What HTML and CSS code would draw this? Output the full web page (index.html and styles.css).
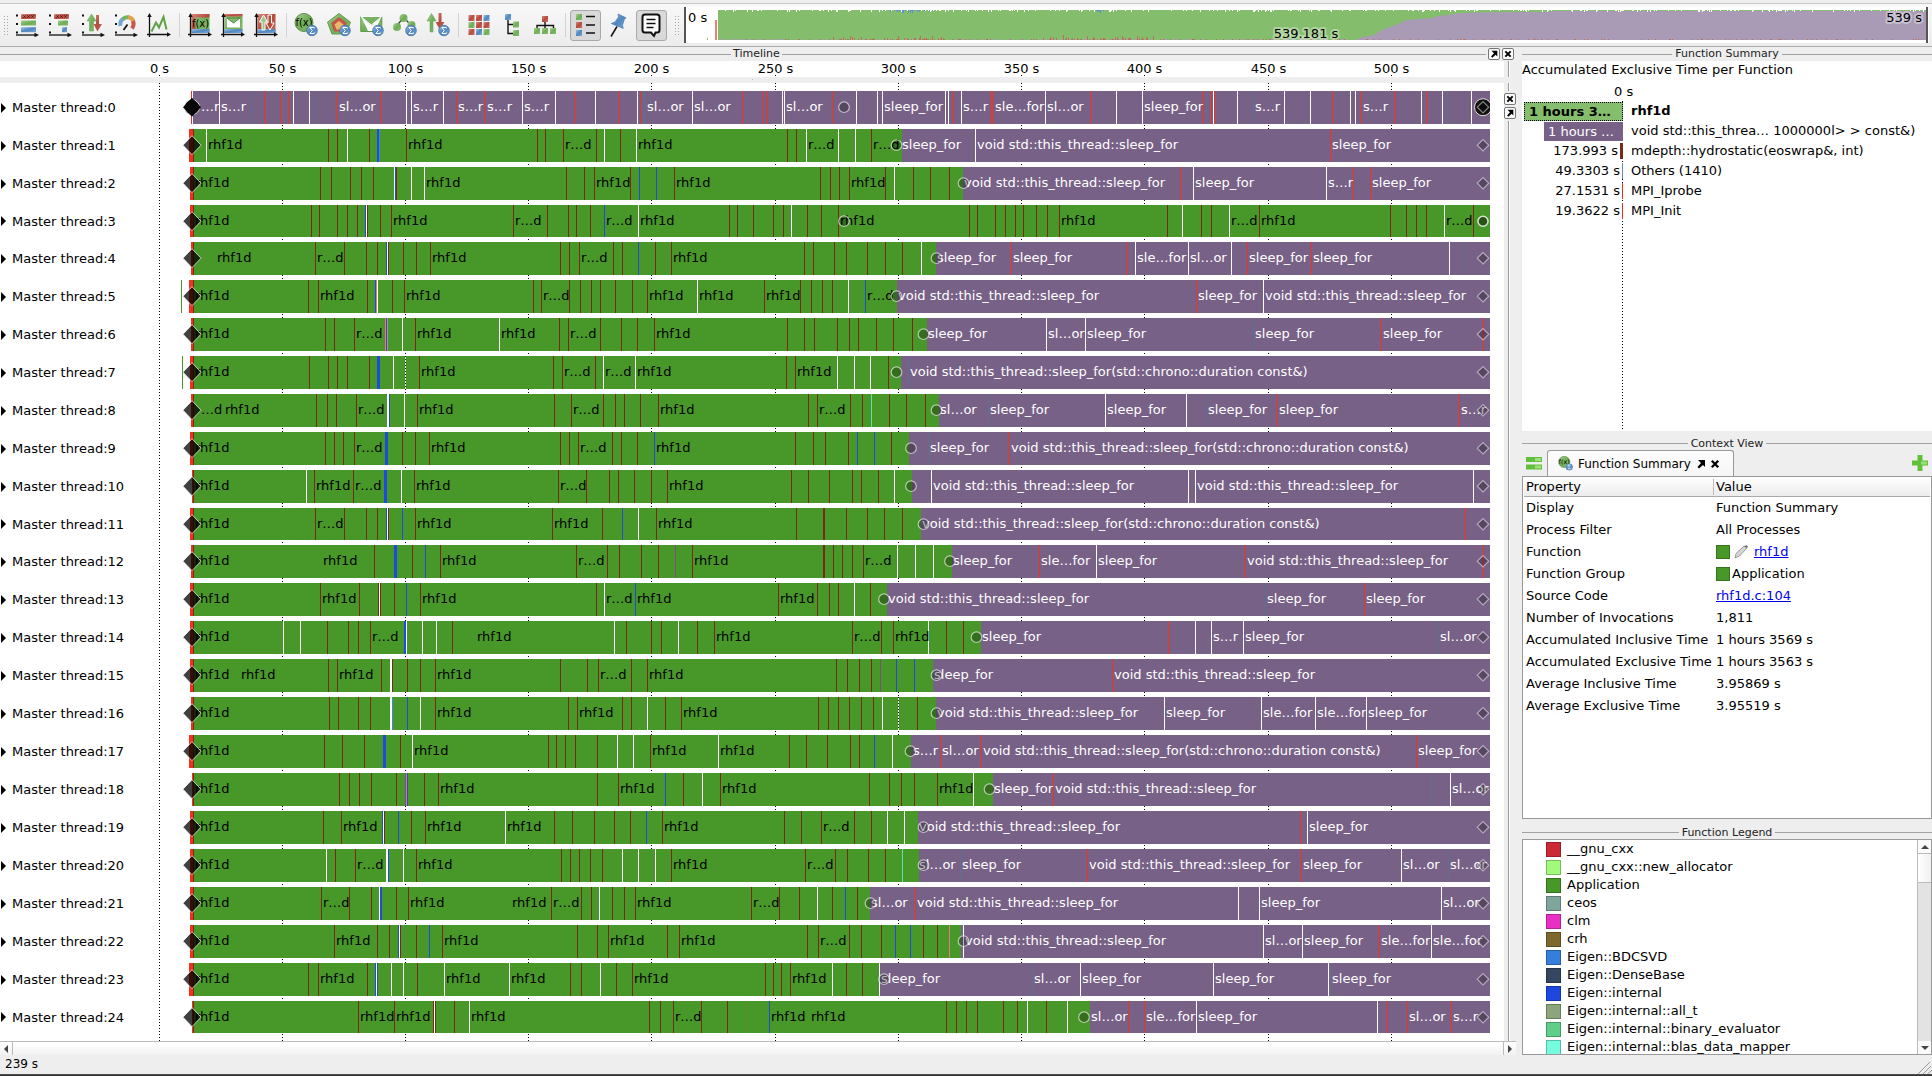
FILE: index.html
```html
<!DOCTYPE html>
<html lang="en">
<head>
<meta charset="utf-8">
<title>Trace View</title>
<link rel="stylesheet" href="styles.css">
</head>
<body>
<svg class="sprite" width="0" height="0">
  <defs>
    <linearGradient id="gr" x1="0" y1="0" x2="1" y2="1"><stop offset="0" stop-color="#a9cf96"/><stop offset=".5" stop-color="#6fae55"/><stop offset="1" stop-color="#86ba70"/></linearGradient>
    <linearGradient id="rd" x1="0" y1="0" x2="1" y2="1"><stop offset="0" stop-color="#d58a7c"/><stop offset=".5" stop-color="#b44b3e"/><stop offset="1" stop-color="#c86f60"/></linearGradient>
    <linearGradient id="bl" x1="0" y1="0" x2="1" y2="1"><stop offset="0" stop-color="#9fc1e4"/><stop offset=".5" stop-color="#4f86c0"/><stop offset="1" stop-color="#7aa9d8"/></linearGradient>
    <symbol id="dots" viewBox="0 0 24 24"><path d="M1 1.500h2v2H1zM1 10h2v2H1zM1 18.500h2v2H1z" fill="#111"/><path d="M1 22h20" stroke="#111" stroke-width="1.300"/><path d="M19.500 19.800L24 22l-4.500 2.200z" fill="#111"/></symbol>
    <symbol id="axes" viewBox="0 0 24 24"><path d="M2.500 24V3M0 21.500h21" stroke="#111" stroke-width="1.300" fill="none"/><path d="M.3 4L2.500 0l2.200 4zM20 19.300L24 21.500 20 23.700z" fill="#111"/></symbol>
    <symbol id="sum" viewBox="0 0 12 12"><circle cx="6" cy="6" r="5.300" fill="url(#bl)" stroke="#3c6fa8" stroke-width=".8"/><path d="M8.300 4V3H3.900l2.400 3-2.400 3h4.400V8" fill="none" stroke="#fff" stroke-width="1"/></symbol>
    <symbol id="popout" viewBox="0 0 12 12"><path d="M3 2h7v7L8 7 4 10.500 2.500 9 6 5z" fill="#000"/></symbol>
    <symbol id="close" viewBox="0 0 12 12"><path d="M2.800 2.800l6.400 6.400M9.200 2.800l-6.400 6.400" stroke="#000" stroke-width="2.300"/></symbol>
    <symbol id="fx" viewBox="0 0 24 24"><circle cx="10" cy="9.500" r="9" fill="url(#gr)" stroke="#5f8f4c"/><text x="10" y="13" font-size="10" text-anchor="middle" font-family="DejaVu Sans">f(x)</text><use href="#sum" x="12" y="11.500" width="12" height="12"/></symbol>
  </defs>
</svg>

<header class="toolbar">
  <i class="grip"></i>
  <span class="tool"><svg viewBox="0 0 24 24"><use href="#dots"/><rect x="6" y="1" width="15" height="5" rx="1" fill="url(#rd)"/><path d="M8.500 2.500l2 2m0-2l-2 2M12.500 2.500l2 2m0-2l-2 2M16.500 2.500l2 2m0-2l-2 2" stroke="#3b1410"/><rect x="6" y="7.500" width="15" height="5" fill="url(#gr)"/><rect x="6" y="14.200" width="15" height="5" fill="url(#bl)"/></svg></span>
  <span class="tool"><svg viewBox="0 0 24 24"><use href="#dots"/><rect x="6" y="1" width="15" height="5" rx="1" fill="url(#rd)"/><path d="M8.500 2.500l2 2m0-2l-2 2M12.500 2.500l2 2m0-2l-2 2M16.500 2.500l2 2m0-2l-2 2" stroke="#3b1410"/><rect x="10" y="7.500" width="10" height="5" fill="url(#gr)"/><rect x="14" y="14.200" width="5" height="5" fill="url(#bl)"/></svg></span>
  <span class="tool"><svg viewBox="0 0 24 24"><use href="#dots"/><path d="M8.500 18V8H6l4.500-7L15 8h-2.500v10z" fill="url(#gr)" stroke="#5f9a4c" stroke-width=".5"/><path d="M15 2h3v9h3l-4.500 7.500L12.500 11H15z" fill="url(#rd)"/></svg></span>
  <span class="tool"><svg viewBox="0 0 24 24"><use href="#dots"/><g fill="none" stroke-width="4"><path d="M6.500 13a7 7 0 0 1 3-7.500" stroke="#73a9d0"/><path d="M9 6a7 7 0 0 1 6-1.500" stroke="#77b35f"/><path d="M14 4a7 7 0 0 1 5.500 4.500" stroke="#e0a24c"/><path d="M19 8q1.500 4-1 7.500" stroke="#c9584a"/></g><path d="M9.500 17l4-5.500" stroke="#111" stroke-width="1.800"/></svg></span>
  <span class="tool"><svg viewBox="0 0 24 24"><use href="#axes"/><path d="M4.500 18.500L9 9.500l3 5L16.500 4l3 12.500" fill="none" stroke="#5fa146" stroke-width="2"/></svg></span>
  <i class="sep"></i>
  <span class="tool"><svg viewBox="0 0 24 24"><rect x="3.500" y="1" width="18" height="19" fill="url(#gr)"/><path d="M3.500 1h18v3.500H7.500V18h-4z" fill="url(#rd)"/><path d="M3.500 16h18v4h-18z" fill="url(#bl)"/><text x="12.500" y="13.500" font-size="10" text-anchor="middle" font-family="DejaVu Sans">f(x)</text><use href="#axes"/></svg></span>
  <span class="tool"><svg viewBox="0 0 24 24"><rect x="3.500" y="1" width="18" height="19" fill="url(#gr)"/><path d="M3.500 1h18v2.500h-18z" fill="url(#rd)"/><path d="M3.500 16h18v4h-18z" fill="url(#bl)"/><path d="M6 5h13v9.500H6z" fill="#fff"/><path d="M6 5l6.500 5L19 5z" fill="#85b774" stroke="#4d8a39"/><use href="#axes"/></svg></span>
  <span class="tool"><svg viewBox="0 0 24 24"><rect x="3.500" y="1" width="18" height="19" fill="url(#rd)"/><path d="M3.500 16h18v4h-18z" fill="url(#bl)"/><path d="M8 17V9H5.500L9.500 2l4 7H11v8z" fill="#9aca88" stroke="#fff"/><path d="M14 2h3.500v8H20l-4 7-4-7h2z" fill="#b9473c" stroke="#fff"/><use href="#axes"/></svg></span>
  <i class="sep"></i>
  <span class="tool"><svg viewBox="0 0 24 24"><use href="#fx"/></svg></span>
  <span class="tool"><svg viewBox="0 0 24 24"><path d="M12 .5l11.500 8.700L19 21H5L.5 9.200z" fill="url(#gr)" stroke="#5f9a4c"/><path d="M12 4l8 6-3.300 8.500H7.300L4 10z" fill="#c2584a"/><path d="M12 8l4.500 3.500-2 5h-5l-2-5z" fill="#e8b96a"/><use href="#sum" x="12" y="11.500" width="12" height="12"/></svg></span>
  <span class="tool"><svg viewBox="0 0 24 24"><path d="M.8 3.500h21v15H.8z" fill="url(#gr)" stroke="#5f9a4c"/><path d="M1.500 4.500l9.800 8 9.800-8L15 18H8z" fill="#fff"/><path d="M.8 3.500l10.500 8.500 10.500-8.500z" fill="#79b163" stroke="#fff"/><use href="#sum" x="12" y="11.500" width="12" height="12"/></svg></span>
  <span class="tool"><svg viewBox="0 0 24 24"><path d="M4 12.500l6.500-8 8 8" fill="none" stroke="#333" stroke-width="1.200"/><circle cx="10.500" cy="5" r="4" fill="url(#gr)"/><circle cx="4" cy="14" r="4" fill="url(#gr)"/><circle cx="18.500" cy="12" r="4" fill="url(#gr)"/><use href="#sum" x="12" y="11.500" width="12" height="12"/></svg></span>
  <span class="tool"><svg viewBox="0 0 24 24"><path d="M4 19V8H1L5.500.5 10 8H7v11z" fill="url(#gr)" stroke="#5f9a4c" stroke-width=".5"/><path d="M12.500 0h3v9h3l-4.500 8L9.500 9h3z" fill="url(#rd)"/><use href="#sum" x="12" y="11.500" width="12" height="12"/></svg></span>
  <i class="sep"></i>
  <span class="tool"><svg viewBox="0 0 24 24"><g fill="url(#rd)"><rect x="1.500" y="2" width="6" height="6"/><rect x="9" y="2" width="6" height="6"/><rect x="16.500" y="9" width="6" height="6"/><rect x="9" y="9" width="6" height="6"/><rect x="1.500" y="16" width="6" height="6"/></g><rect x="16.500" y="2" width="6" height="6" fill="url(#bl)"/><rect x="1.500" y="9" width="6" height="6" fill="url(#gr)"/><rect x="9" y="16" width="6" height="6" fill="url(#bl)"/><rect x="16.500" y="16" width="6" height="6" fill="url(#gr)"/></svg></span>
  <span class="tool"><svg viewBox="0 0 24 24"><path d="M8 5v15.500h6M8 11.500h6" fill="none" stroke="#111" stroke-width="1.400"/><rect x="5" y="1" width="6" height="6" fill="url(#bl)"/><rect x="13" y="8.500" width="6" height="6" fill="url(#gr)"/><rect x="13" y="17" width="6" height="6" fill="url(#gr)"/></svg></span>
  <span class="tool"><svg viewBox="0 0 24 24"><path d="M4 16v-3.500h16.500V16M12 9v7" fill="none" stroke="#111" stroke-width="1.400"/><rect x="9" y="3" width="6" height="6" fill="url(#rd)"/><rect x="1" y="15" width="6" height="6" fill="url(#gr)"/><rect x="9" y="15" width="6" height="6" fill="url(#gr)"/><rect x="17" y="15" width="6" height="6" fill="url(#gr)"/></svg></span>
  <i class="sep"></i>
  <span class="tool on"><svg viewBox="0 0 24 24"><rect x="3" y="1" width="6" height="6" fill="url(#gr)"/><rect x="3" y="9" width="6" height="6" fill="url(#rd)"/><rect x="3" y="17" width="6" height="6" fill="url(#bl)"/><path d="M13 3.500h9M13 12h9M13 20h9" stroke="#111" stroke-width="1.700"/></svg></span>
  <span class="tool"><svg viewBox="0 0 24 24"><path d="M5 23.500l6-10" stroke="#111" stroke-width="1.500"/><path d="M12 1l8 3.800-1.500 1.500-.5 1-1.500 5 .8 3.200-12-5L9 9l3.500-5z" fill="url(#bl)" stroke="#3b6ea5" stroke-width=".6"/></svg></span>
  <span class="tool on"><svg viewBox="0 0 24 24"><path d="M6 1.500h12q2.500 0 2.500 2.500v13q0 2.500-2.500 2.500h-1.500L15 23l-3-3.500H6Q3.500 19.500 3.500 17V4Q3.500 1.500 6 1.500z" fill="#fff" stroke="#111" stroke-width="2"/><path d="M7.500 6.500h9M7.500 10.500h9M7.500 14.500h7" stroke="#111" stroke-width="1.500"/></svg></span>
  <i class="grip grip-end"></i>
  <svg class="overview" id="overview" width="1245" height="36" viewBox="684 8 1245 36"></svg>
</header>

<main class="workspace">
  <section class="timeline">
    <div class="dock-title"><hr><span>Timeline</span><hr>
      <b class="mini"><svg><use href="#popout"/></svg></b><b class="mini"><svg><use href="#close"/></svg></b></div>
    <div class="axis-row"><svg id="axis" width="1504" height="16"></svg><i class="rail"></i></div>
    <div class="splitter"></div>
    <div class="chart-row">
      <div class="chart">
        <svg class="grid" id="grid" width="1504" height="958"></svg>
        <div class="rows" id="rows"></div>
      </div>
      <div class="side"><i class="rail short"></i><b class="mini"><svg><use href="#close"/></svg></b><b class="mini"><svg><use href="#popout"/></svg></b><i class="rail long"></i></div>
    </div>
    <div class="hscroll"><i class="arrow left"></i><i class="arrow right"></i></div>
  </section>

  <aside class="panels">
    <div class="dock-title"><hr><span>Function Summary</span><hr></div>
    <section class="summary">
      <h2>Accumulated Exclusive Time per Function</h2>
      <div class="zero">0 s</div>
      <div class="bars" id="bars"></div>
    </section>
    <div class="dock-title context-title"><hr><span>Context View</span><hr></div>
    <div class="tabs">
      <svg class="eq" width="16" height="13"><path d="M0 0h16v5H0zM0 7.500h16v5H0z" fill="#62bf3b"/><path d="M9 1h6v3H9zM9 8.500h6v3H9z" fill="#9be27c"/></svg>
      <div class="tab"><svg width="15" height="15" viewBox="0 0 24 24"><use href="#fx"/></svg><span>Function Summary</span><svg width="12" height="12"><use href="#popout"/></svg><svg width="12" height="12"><use href="#close"/></svg></div>
      <svg class="plus" width="16" height="16"><path d="M5.500 0h5v5.500H16v5h-5.500V16h-5v-5.500H0v-5h5.500z" fill="#62c13a"/><path d="M9 6.500h6v3H9z" fill="#97e077"/></svg>
    </div>
    <section class="context">
      <div class="prop head"><span>Property</span><span>Value</span></div>
      <div class="prop"><span>Display</span><span>Function Summary</span></div>
      <div class="prop"><span>Process Filter</span><span>All Processes</span></div>
      <div class="prop"><span>Function</span><span><i class="sw"></i><svg class="pen" width="14" height="14"><path d="M1 13l1-4.500L10 1l3 2-7.500 8z" fill="#d4d4d4" stroke="#888" stroke-width=".8"/><path d="M10 1l3-.8.800 1.800-.8 1z" fill="#666"/></svg><a>rhf1d</a></span></div>
      <div class="prop"><span>Function Group</span><span><i class="sw"></i><em>Application</em></span></div>
      <div class="prop"><span>Source Code</span><span><a>rhf1d.c:104</a></span></div>
      <div class="prop"><span>Number of Invocations</span><span>1,811</span></div>
      <div class="prop"><span>Accumulated Inclusive Time</span><span>1 hours 3569 s</span></div>
      <div class="prop"><span>Accumulated Exclusive Time</span><span>1 hours 3563 s</span></div>
      <div class="prop"><span>Average Inclusive Time</span><span>3.95869 s</span></div>
      <div class="prop"><span>Average Exclusive Time</span><span>3.95519 s</span></div>
    </section>
    <div class="dock-title legend-title"><hr><span>Function Legend</span><hr></div>
    <section class="legend">
      <ul id="legend"></ul>
      <div class="vscroll"><i class="arrow up"></i><i class="thumb"></i><i class="trough"></i><i class="arrow down"></i></div>
    </section>
  </aside>
</main>
<footer class="status"><span>239 s</span><svg width="14" height="12"><path d="M0 12L12 0M5 12l8-8M9.500 12L14 8" stroke="#999" fill="none"/></svg></footer>
<div class="desktop-edge"></div>
<script src="timeline.js"></script>
</body>
</html>
```
FILE: styles.css
```css
* { box-sizing: border-box; }
body { margin: 0; width: 1932px; height: 1076px; overflow: hidden; background: #eee; color: #000; font: 13px/16px "DejaVu Sans", sans-serif; }
svg { display: block; }
.sprite { position: absolute; }
hr { flex: 1; margin: 0; border: 0; border-top: 1px solid #a2a2a2; }

.toolbar { display: flex; align-items: center; height: 47px; padding: 4px 3px 0 3px; background: linear-gradient(#eee 3px, #c8c8c8 3px, #c8c8c8 4px, #f8f8f8 4px, #ececec); border-bottom: 1px solid #adadad; }
.grip { width: 5px; height: 20px; margin-right: 2.500px; background: radial-gradient(circle, #aaa 0.800px, transparent 1px) 0 0 / 3px 3px; }
.grip-end { margin: 0 5px 0 6px; }
.sep { width: 1px; height: 24px; margin: 0 3px 0 3.500px; background: #d3d3d3; }
.tool { flex: none; display: flex; align-items: center; justify-content: center; width: 33px; height: 33px; }
.tool svg { width: 24px; height: 24px; overflow: visible; }
.tool.on { width: 31px; margin: 0 1px; height: 31px; border: 1px solid #a9a9a9; border-radius: 3px; background: #d9d9d9; }
.overview { flex: none; }
.overview text { font-size: 13px; paint-order: stroke; stroke: rgba(255,255,255,.35); stroke-width: 4px; stroke-linejoin: round; }

.workspace { display: flex; height: 1008px; }
.timeline { width: 1522px; flex: none; display: flex; flex-direction: column; }
.dock-title { display: flex; align-items: center; gap: 3px; height: 14px; font-size: 11px; line-height: 14px; color: #222; }
.timeline .dock-title { padding-right: 8px; gap: 2px; }
.timeline .dock-title hr:first-child { flex: 0 0 731px; }
.mini { flex: none; display: flex; align-items: center; justify-content: center; width: 12px; height: 12px; border: 1px solid #777; border-radius: 2px; background: #fafafa; }
.mini svg { width: 10px; height: 10px; }
.mini use, .tab use { width: 100%; height: 100%; }
.axis-row { display: flex; height: 16px; }
.axis-row svg { background: #fff; }
.axis-row text { font-size: 13px; text-anchor: middle; }
.rail { width: 2px; margin-left: 4px; background: #fff; border-left: 1px solid #999; }
.splitter { height: 6px; background: radial-gradient(circle, #bbb 0.700px, transparent 1px) 751px 1px / 3px 3px no-repeat, #eee; }
.chart-row { display: flex; height: 958px; }
.chart { position: relative; width: 1504px; background: #fff; }
.grid { position: absolute; left: 0; top: 0; }
.rows { position: relative; display: flex; flex-direction: column; gap: 5px; padding-top: 8px; }
.row { display: flex; height: 33px; }
.row.low { height: 32px; }
.name { display: flex; align-items: center; gap: 6px; width: 159px; padding-left: 1px; line-height: 33px; }
.name::before { content: ""; border-left: 5px solid #000; border-top: 5px solid transparent; border-bottom: 5px solid transparent; }
.track { overflow: hidden; }
.track text { font-size: 13px; }
.side { display: flex; flex-direction: column; width: 18px; gap: 2px; }
.rail.short { height: 8px; }
.rail.long { flex: 1; }
.hscroll { display: flex; justify-content: space-between; width: 1516px; height: 14px; border-top: 1px solid #bbb; background: linear-gradient(#fff, #f2f2f2); }
.arrow { display: flex; align-items: center; justify-content: center; width: 13px; border: solid #bbb; border-width: 0 1px 0 0; }
.arrow.right { border-width: 0 0 0 1px; }
.arrow::before { content: ""; border: 4px solid transparent; }
.left::before { border-right-color: #444; border-left: 0; }
.right::before { border-left-color: #444; border-right: 0; }

.panels { width: 410px; display: flex; flex-direction: column; }
.summary { height: 370px; background: #fff; padding-top: 1px; }
.summary h2 { margin: 0; font: inherit; }
.zero { height: 19px; margin-top: 4px; padding: 2px 0 0 92px; }
.bars { height: 330px; background: repeating-linear-gradient(#000 0 1px, transparent 1px 3px) 100px 0 / 1px 100% no-repeat; }
.bar-row { display: flex; height: 20px; align-items: center; }
.bar-cell { display: flex; justify-content: flex-end; align-items: center; width: 101px; height: 100%; gap: 2px; }
.bar { height: 19px; line-height: 19px; padding-left: 4px; overflow: hidden; white-space: nowrap; }
.bar-row.sel { font-weight: bold; }
.bar-row.sel .bar { border: 1px dotted #000; line-height: 17px; }
.fn { padding-left: 8px; white-space: nowrap; }
.context-title { height: 19px; padding-top: 6px; }
.tabs { display: flex; height: 26px; align-items: center; }
.eq { margin: 0 5px 0 4px; }
.tab { display: flex; align-items: center; width: 187px; height: 26px; padding-left: 10px; border: 1px solid #999; border-bottom: 0; border-radius: 3px 3px 0 0; background: linear-gradient(#fdfdfd, #f6f6f6); font-size: 12px; }
.tab span { margin: 0 4px 0 5px; }
.tab svg + svg { margin-left: 2px; }
.plus { margin-left: auto; margin-right: 4px; }
.context { height: 343px; background: #fff; border: 1px solid #999; }
.prop { display: flex; height: 22px; align-items: center; padding-left: 3px; }
.prop span { display: flex; align-items: center; }
.prop span:first-child { width: 190px; white-space: nowrap; }
.prop.head { height: 20px; margin: 0 1px; padding-left: 2px; border-bottom: 1px solid #aaa; background: linear-gradient(#fff, #ececec); }
.prop.head span:last-child { border-left: 1px solid #bbb; margin-left: -3px; padding-left: 2px; }
.prop a { color: #00e; text-decoration: underline; }
.prop em { font-style: normal; padding-left: 2px; }
.sw { width: 14px; height: 14px; background: #489729; border: 1px solid #35731e; }
.pen { margin: 0 6px 0 4px; }
.legend-title { height: 20px; padding-top: 7px; }
.legend { display: flex; height: 216px; border: 1px solid #999; background: #fff; overflow: hidden; }
.legend ul { flex: 1; margin: 0; padding: 0 0 0 23px; list-style: none; overflow: hidden; }
.legend li { display: flex; align-items: center; gap: 6px; height: 18px; }
.legend li i { width: 15px; height: 15px; border: 1px solid rgba(0,0,0,.25); background-clip: border-box; }
.vscroll { display: flex; flex-direction: column; width: 14px; border-left: 1px solid #bbb; background: #e3e3e3; }
.vscroll .arrow { height: 13px; border: 0; background: #fafafa; }
.up::before { border-bottom-color: #444; border-top: 0; }
.down::before { border-top-color: #444; border-bottom: 0; }
.thumb { height: 30px; background: linear-gradient(90deg, #fff, #f0f0f0); border: solid #bbb; border-width: 1px 0; }
.trough { flex: 1; }
.status { display: flex; justify-content: space-between; height: 19px; padding-left: 5px; font-size: 12px; line-height: 19px; align-items: flex-start; }
.status svg { margin-top: 7px; }
.desktop-edge { height: 2px; background: linear-gradient(#555, #2c2c2c); }
```
FILE: timeline.js
```js
// Event tokens: colour letter, x position, optional *width, optional label letter.
// '-' places a label without an event line.
const COLORS = { m: '#7a2a14', w: '#fff', b: '#1f4adf', R: '#f0321f', t: '#5f6f8f', p: '#7d4f80', c: '#5fe0b0', k: '#e07a86', l: '#3c86dc', g: 'grid', o: '#6b8a1e' };
const LABELS = { h: 'rhf1d', d: 'r…d', D: '…d', s: 'sleep_for', o: 'sl…or', e: 'sle…for', r: 's…r', a: '…r', v: 'void std::this_thread::sleep_for', V: 'void std::this_thread::sleep_for(std::chrono::duration const&)' };

// [start of init, start of sleep phase, marker centre, events]
const THREADS = [
  [191, 193, 844, 'w192 -199a w219r t250 R264 R280 R288 w293 w309 t314 R337o R380 w406 w411r w443 R456r R485r w522r w555 R574 w595 R619 w637 R640 t643 t645o w692o R742 R763 R766 w782 w784o R833 w856 w877 w882s w945 w948 R953 w961r R990 R993e w1045o R1090 w1116 w1142s R1203 t1206 R1211 w1213 R1214 w1237 t1253r w1284 w1310 R1332 w1350 w1355 R1361r R1395 w1421 R1426 w1442 t1447 w1471'],
  [189, 902, 896.5, 'w206h m328 m337 w347 m369 b377*2 l379 m406h m537 m545 m563d m596 w604 m620 w636h m787 m796 w806d w838 w855 m871d -900s w975v R1330s'],
  [190, 963, 963.5, '-193h m320 m331 m350 m361 m373 w394 b395 m396 w411 w424h m566 m584 m594h m630 b639 b656 m674h m820 m830 m839 m849h m885 w894 m913 m930 m949 -962v R1180 w1193s w1326r R1353 R1370s'],
  [190, 1490, 844, '-193h m311 m319 m337 m347 m357 b365 w366 m367 m380 m391h m513d m547 m568 m576 m590 b604d w638h m729 m737 m753 m773 m783 w791 m807 m821 m838h m969 m977 m995 m1005 m1015 m1023 m1036 m1047 m1059h m1167 w1182 m1201 m1211 w1229d m1259h m1390 m1406 m1416 m1426 w1444d m1473'],
  [191, 936, 936.5, '-215h m315d m344 m366 m377 b386 w387 m388 m403 m416 m430h m560 m569 m579d m613 m622 b638 m655 m671h m804 m813 m834 m846 m867 m885 m902 w921 -935s R1011s R1126 w1135e w1188o w1231 R1247s R1311s w1449 t1462'],
  [189, 897, 896.5, 'G181 -193h m308 m318h m367 b375 k376 w377 m392 m404h m533 m541d m569 m580 m591 m600 m615 m632 m647h w697h m764h m800 m811 m822 m832 w848 b865d -896v R1196s w1263v'],
  [191, 927, 923.5, '-193h m325 m334 m354d k385 b386 k387 w402 m415h w499h m559 m568d m600 m621 m637 m654h m787 m804 m814 m837 m849 m858 m876 m893 m912 -926s w1046o w1085s t1253s R1381s R1483'],
  [190, 901, 896.5, 'G182 -193h m309 m328 m337 m347 m369 b377*3 w393 g405 m419h m553 m562d m595 w603d w635h m786 m795h w837 w854 w870 m888 t908V'],
  [191, 939, 936.5, '-199D -223h m316 m327 m336 m356d w387*2 b389 w404 m417h m554 m571d m603 m615 m624 m640 m658h m808 m817d m850 m862 c871 m889 m906 m925 -938o t988s w1105s w1186 t1206s R1277s R1459r'],
  [190, 909, 911, '-193h m325 m334 m343 m354d b385*3 m402 m415 m429h m560 m569 m578d m612 m621 m637 b654h m795 m813 m825 m848 b857 b874 m891 t928s R1009V'],
  [192, 912, 911, '-193h w306 m314h m353d b384*3 w401 m414h m558d m586 m609 m618 m634 m651 m667h m791 m808 m829 m852 m861 m878 w894 w931v w1188 w1195v w1473'],
  [190, 921, 923.5, '-193h m315d m344 m366 m377 b386 w387 m388 b402 m415h m552h m602 b622 w638 m656h m796 m823*2 m846 m867 m884 m902 -920V R1465'],
  [191, 952, 950, '-193h -321h m374 b394*3 m412 b425 m440h m576d m607 m619 m641 m658 p675 m692h m823*2 m833 m842 m852 m863d w897 w915 w933 -951s R1039e w1096s R1245v R1483'],
  [190, 887, 884, '-193h m320h m359 m378 w379 m380 m394 b406 m420h m596 w604d b635h m778h m817 m829 m838 w854 m870 -886v t1265s R1364s'],
  [190, 981, 976.5, '-193h w283 w300 m327 m348 m358 m370d b404*2 w406 w422 w436 m452 -475h w614 m626 m651 m661 w678 m697 m714h m852d m881 m893h w928 m946 m963 -980s R1169 w1195 w1211r w1243s t1438o'],
  [190, 933, 936.5, '-193h -239h m328 m337h m381 w390*2 m392 m407 m420 m435h m560 m587 m598d m631 m647h m836 m847 m859 m871 p880 b896 b914 -932s R1112v'],
  [191, 936, 936.5, '-193h m329 m338 m358 m370 w390*2 l392 b407 w420 m435h m568 m577h m622 m631 w647 m665 m681h m818 m828 m838 m849 m861 m873 w882 g898 m917 -935v w1164s w1261e w1315e w1366s'],
  [189, 911, 910.5, '-193h m324 m342 m364 b383*3 m400 w412h m548 m556 m565 m575 m597 w617 w633 m650h w718h m789 m806 m827 m850 m859 b874 w892 -911r R940o R981V R1416s'],
  [192, 993, 989.5, '-193h m339 m349 m359 m371 m396 p405 k406 b407 m424 m438h m597 m618h b665 m683 w702 m720h m869 m889 m901 m914 m937h w973 -992s R1053v t1431 w1450o'],
  [190, 918, 923.5, '-193h m323 m341h b382 w383 m384 b398 m411 m425h w505h m554 m572 m594 m614 m630 b646 m662h m784 m801 m821d m854 m871 w887 w904 -917v R1300 w1307s'],
  [190, 919, 923.5, '-193h w326 m335 m355d w386*2 b388 w403 m416h m561 m570 m579 m590 m602 w622 w638 w655 m671h m805d m835 m847 m868 m885 c902 -917o t960s R1087v R1301s w1401o t1448o'],
  [190, 870, 870.5, '-193h m321d m349 m371 w379 b380*2 m396 m408h -510h m551d m581 m591 w599 m612 m624 m635h m751d m779 m799 w817 m832 b845 m857 -869o R915v w1238 w1259s w1441o'],
  [190, 961, 963.5, '-193h m334h m377 m389 b398 w399 m400 m416 b429 m442h m577 m597 m608h m667 m679h m807 m818d m849 m861 m881 b895 b910 m923 m937 k949 w963v w1263o w1302s R1379e w1431e'],
  [189, 880, 884, '-193h m308 m318h m367 b375 w376 b377 w391 w403 m417 w444h w509h m570 m581 w600 m616 m632h m765 m773 m781 m790h w832 m846 m862 w879s t1032o w1080s w1213s w1328 t1330s'],
  [192, 1090, 1084, '-193h m358h m394h m433 w434 m435 m454 w469h m649 m660 m673d m701 m727 o747 b769h -809h m946 m956 m966 m977 m1003 m1017 w1027 m1046 w1067 -1089o R1128 R1144e w1196s w1377 R1387 R1407o R1451r']
];
const TICKS = [159, 282, 405, 528, 651, 775, 898, 1021, 1144, 1268, 1391];
const GREEN = '#489729', PURPLE = '#786187';
const rect = (x, y, w, h, fill) => `<rect x="${x}" y="${y}" width="${w}" height="${h}" fill="${fill}" shape-rendering="crispEdges"/>`;
const diamond = (x, y, rx, ry, style) => `<path d="M${x - rx} ${y}L${x} ${y - ry}L${x + rx} ${y}L${x} ${y + ry}z" ${style}/>`;

function track([start, split, marker, events], i) {
  const h = i === 3 || i === 11 || i === 24 ? 32 : 33, y = 16.2;
  let lines = '', labels = '';
  let out = rect(start, 0, 193 - start, h, COLORS.R);
  if (i > 0) out += rect(193, 0, split - 193, h, GREEN) + rect(193, 0, 1, h, COLORS.m);
  out += rect(split, 0, Math.max(0, 1490 - split), h, PURPLE);
  for (const token of events.split(' ')) {
    const [, kind, pos, width, label] = token.match(/^(\D)(\d+)(?:\*(\d))?(\w)?$/);
    const x = +pos;
    if (kind === 'G') lines += rect(x, 0, 1, h, GREEN);
    else if (kind === 'g') lines += rect(x, 0, 1, h, '#fff') + `<path d="M${x + .5} 0V${h}" stroke="#222" stroke-dasharray="1 2"/>`;
    else if (kind !== '-') lines += rect(x, 0, width || 1, h, COLORS[kind]);
    if (label) {
      const dark = i > 0 && x < split - 6 && 'hdD'.includes(label);
      labels += `<text x="${x + 2}" y="20" fill="${dark ? '#000' : '#fff'}">${LABELS[label].replace('&', '&amp;')}</text>`;
    }
  }
  out += lines + labels;
  if (i === 0) out += `<circle cx="192" cy="${y}" r="7.500" fill="#111" stroke="#ddd"/>` + diamond(192, y, 9, 9.5, 'fill="#080808"');
  else out += diamond(192, y, 9, 9.5, 'fill="#000" fill-opacity=".75" stroke="#fff" stroke-opacity=".7"');
  out += `<circle cx="${marker}" cy="${y}" r="5.300" fill="#000" fill-opacity=".27" stroke="#fff" stroke-opacity=".6" stroke-width="1.200"/>`;
  if (i === 0) out += `<circle cx="1483" cy="${y}" r="8.500" fill="#111" stroke="#ddd"/>`;
  out += i === 3
    ? `<circle cx="1483" cy="${y}" r="5" fill="#000" fill-opacity=".45" stroke="#fff" stroke-opacity=".8" stroke-width="1.500"/>`
    : diamond(1483, y, 5.7, 5.7, 'fill="#000" fill-opacity=".27" stroke="#fff" stroke-opacity=".5" stroke-width="1.200"');
  return `<div class="row${h === 32 ? ' low' : ''}"><span class="name">Master thread:${i}</span><svg class="track" width="1331" height="${h}" viewBox="159 0 1331 ${h}">${out}</svg></div>`;
}

document.getElementById('rows').innerHTML = THREADS.map(track).join('');
document.getElementById('grid').innerHTML = TICKS.map(x => `<path d="M${x + .5} 0V958" stroke="#000" stroke-dasharray="1 2"/>`).join('');
document.getElementById('axis').innerHTML = TICKS.map((x, i) => `<text x="${x + .5}" y="12">${i * 50} s</text>` + rect(x, 14, 1, 1, '#000')).join('');

// Overview strip with a small deterministic noise along its edges.
let seed = 7;
const rnd = () => (seed = (seed * 16807) % 2147483647) / 2147483647;
let o = rect(684, 8, 1245, 36, '#fff') + rect(718, 11, 1208, 30, '#84bd6c');
o += '<path d="M1356 41L1362 38L1370 37L1376 35L1380 32L1390 28L1398 25L1407 21L1418 20L1432 19L1437 17L1448 16L1460 14L1480 13.500L1510 13L1550 13V12H1926V41z" fill="#a99ab6"/>';
for (let x = 720; x < 1926; x++) {
  const busy = (x > 825 && x < 945) || (x > 1035 && x < 1155);
  if (x < 1350 && rnd() < .4) o += rect(x, 40, 1, 1, '#a99ab6');
  if (rnd() < (busy ? .45 : .12)) {
    const tall = busy ? 1 + Math.floor(rnd() * rnd() * 5) : 1;
    o += rect(x, 41 - tall, 1, tall, '#b8735a');
  }
  if (rnd() < .2) o += rect(x, 11, 1, rnd() < .3 ? 2 : 1, '#fff');
  if (((x > 887 && x < 930) || (x > 1095 && x < 1106)) && rnd() < .35) o += rect(x, 11, 1, 1 + Math.floor(rnd() * 3), '#5b92c9');
}
o += rect(715, 21, 2, 20, '#f08070') + rect(707, 39, 1, 2, '#84bd6c') + rect(684, 8, 2, 36, '#555') + rect(1926, 8, 2, 36, '#555');
o += '<text x="688" y="23">0 s</text><text x="1922" y="23" text-anchor="end">539 s</text><text x="1306" y="39" text-anchor="middle">539.181 s</text>';
document.getElementById('overview').innerHTML = o;

const BARS = [
  ['1 hours 3…', 'rhf1d', 99, '#84bd6c'], ['1 hours …', 'void std::this_threa… 1000000l> > const&)', 79, PURPLE],
  ['173.993 s', 'mdepth::hydrostatic(eoswrap&, int)', 3, '#7a2a14'], ['49.3303 s', 'Others (1410)', 1, '#5b92c9'],
  ['27.1531 s', 'MPI_Iprobe', 1, '#e8321f'], ['19.3622 s', 'MPI_Init', 1, '#e8321f']
];
document.getElementById('bars').innerHTML = BARS.map(([value, name, w, color], i) => {
  const inner = i < 2
    ? `<div class="bar" style="width:${w}px;background:${color};color:${i ? '#fff' : '#000'}">${value}</div>`
    : `<span>${value}</span><div style="width:${w}px;height:16px;background:${color}"></div>`;
  return `<div class="bar-row${i ? '' : ' sel'}"><div class="bar-cell">${inner}</div><span class="fn">${name.replace(/&/g, '&amp;').replace(/>/g, '&gt;')}</span></div>`;
}).join('');

const LEGEND = [['#cc2936', '__gnu_cxx'], ['#a2fa7c', '__gnu_cxx::new_allocator'], ['#489729', 'Application'], ['#7ea69c', 'ceos'], ['#ea2fc4', 'clm'], ['#7d692d', 'crh'], ['#367edb', 'Eigen::BDCSVD'], ['#354661', 'Eigen::DenseBase'], ['#1c48e0', 'Eigen::internal'], ['#8da57c', 'Eigen::internal::all_t'], ['#60ce8b', 'Eigen::internal::binary_evaluator'], ['#76fbdf', 'Eigen::internal::blas_data_mapper']];
document.getElementById('legend').innerHTML = LEGEND.map(([color, name]) => `<li><i style="background-color:${color}"></i>${name}</li>`).join('');
```
